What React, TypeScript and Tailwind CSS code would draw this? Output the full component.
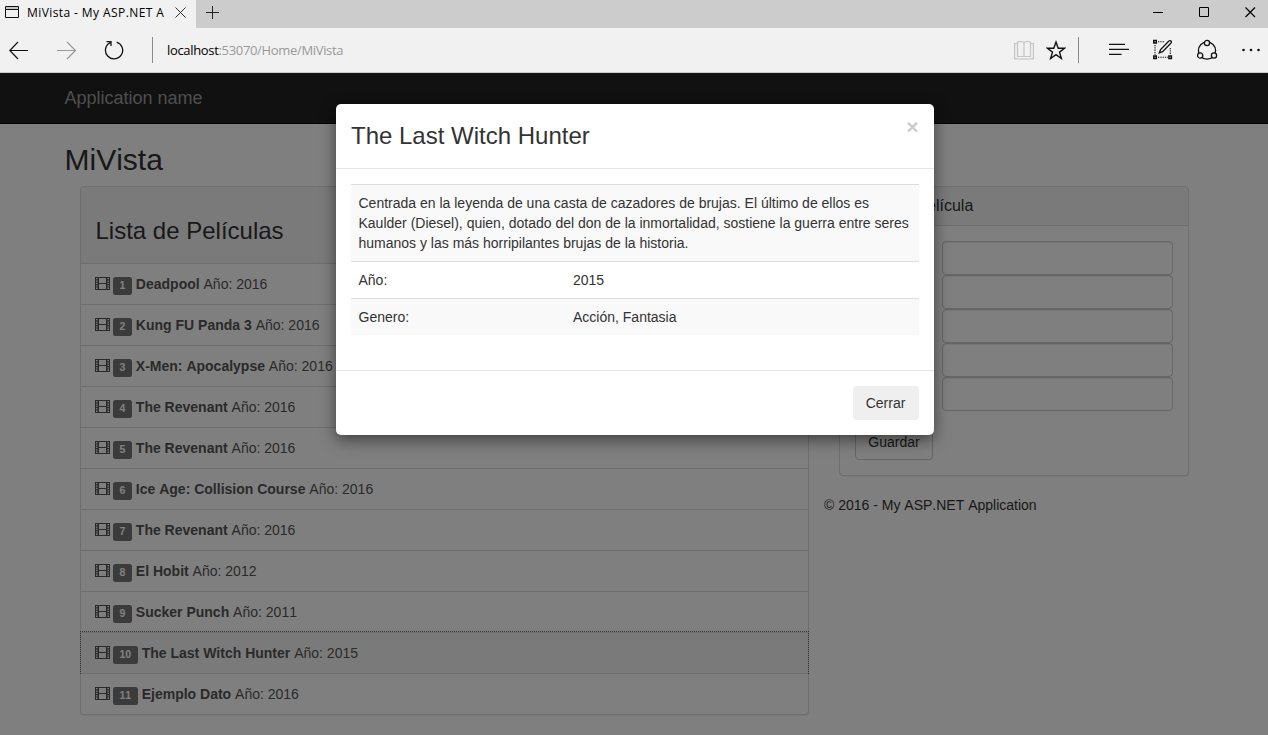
import React from "react";

const movies = [
  { title: "Deadpool", year: 2016 },
  { title: "Kung FU Panda 3", year: 2016 },
  { title: "X-Men: Apocalypse", year: 2016 },
  { title: "The Revenant", year: 2016 },
  { title: "The Revenant", year: 2016 },
  { title: "Ice Age: Collision Course", year: 2016 },
  { title: "The Revenant", year: 2016 },
  { title: "El Hobit", year: 2012 },
  { title: "Sucker Punch", year: 2011 },
  { title: "The Last Witch Hunter", year: 2015 },
  { title: "Ejemplo Dato", year: 2016 },
];

const SELECTED = 9;

function FilmIcon() {
  return (
    <svg width="15" height="13" viewBox="0 0 15 13" className="mt-[13px] block shrink-0" fill="#555">
      <path
        fillRule="evenodd"
        d="M0 0H15V13H0ZM4 1V6H11V1ZM4 7V12H11V7ZM1 1V2.3H2.5V1ZM1 3.4V4.7H2.5V3.4ZM1 5.8V7.1H2.5V5.8ZM1 8.2V9.5H2.5V8.2ZM1 10.6V11.9H2.5V10.6ZM12.5 1V2.3H14V1ZM12.5 3.4V4.7H14V3.4ZM12.5 5.8V7.1H14V5.8ZM12.5 8.2V9.5H14V8.2ZM12.5 10.6V11.9H14V10.6Z"
      />
    </svg>
  );
}

function TabBar() {
  return (
    <div className="flex h-7 bg-[#ccc]">
      <div className="flex w-[196px] bg-[#f1f1f1]">
        <svg width="14" height="12" viewBox="0 0 14 12" className="mt-1.5 ml-[5px] shrink-0" fill="none" stroke="#111">
          <path d="M.5 .5H13.5V11.5H.5ZM.5 3.5H13.5" />
          <path d="M1 2H13" stroke="#999" />
        </svg>
        <span className="ml-2 w-[139px] overflow-hidden text-[12px] leading-[25px] tracking-[0.41px] whitespace-nowrap text-black">MiVista - My ASP.NET A</span>
        <svg width="11" height="11" viewBox="0 0 11 11" className="mt-[7px] ml-[9px] shrink-0" stroke="#333">
          <path d="M.5 .5L10.5 10.5M10.5 .5L.5 10.5" />
        </svg>
      </div>
      <svg width="13" height="13" viewBox="0 0 13 13" className="mt-1.5 ml-2.5" stroke="#222">
        <path d="M6.5 0V13M0 6.5H13" />
      </svg>
      <div className="mt-[7px] mr-3 ml-auto flex gap-9">
        <svg width="10" height="11" viewBox="0 0 10 11" stroke="#000"><path d="M0 5.5H10" /></svg>
        <svg width="10" height="10" viewBox="0 0 10 10" fill="none" stroke="#000"><path d="M.5 .5H9.5V9.5H.5Z" /></svg>
        <svg width="11" height="11" viewBox="0 0 11 11" stroke="#000" strokeWidth="1.2"><path d="M.5 .5L10 10M10 .5L.5 10" /></svg>
      </div>
    </div>
  );
}

function Toolbar() {
  return (
    <div className="flex h-[45px] items-start border-b border-[#ccc] bg-[#f1f1f1] pt-[9px]">
      <svg width="20" height="26" viewBox="0 0 20 26" className="ml-[9px]" fill="none" stroke="#111" strokeWidth="1.2">
        <path d="M.8 13.5H19M9 5L.8 13.5L9 22" />
      </svg>
      <svg width="20" height="26" viewBox="0 0 20 26" className="ml-7" fill="none" stroke="#999" strokeWidth="1.2">
        <path d="M0 13.5H18.5M10 5L18.5 13.5L10 22" />
      </svg>
      <svg width="20" height="26" viewBox="0 0 20 26" className="ml-[27px]" fill="none" stroke="#111" strokeWidth="1.3">
        <path d="M12.7 5.1A8.6 8.6 0 1 1 6.2 5.6M2.5 4.6H7V9" />
      </svg>
      <div className="ml-7 h-[26px] w-px bg-[#8a8a8a]" />
      <span className="ml-[14px] text-[13px] leading-[26px] tracking-[-0.33px] whitespace-nowrap text-[#999]">
        <span className="text-black">localhost</span>:53070/Home/MiVista
      </span>
      <div className="ml-auto flex">
        <svg width="20" height="26" viewBox="0 0 20 26" fill="none" stroke="#c4c4c4" strokeWidth="1.2">
          <path d="M10 5.5V19.5M10 5.5Q7 3.8 3.5 5V19.5H16.5V5Q13 3.8 10 5.5M3 6.5H.6V22H19.4V6.5H17" />
        </svg>
        <svg width="20" height="26" viewBox="0 0 20 26" className="ml-3" fill="none" stroke="#111" strokeWidth="1.4">
          <path d="M10 5L12.2 11.2H18.7L13.5 15.1L15.4 21.5L10 17.7L4.6 21.5L6.5 15.1L1.3 11.2H7.8Z" />
        </svg>
        <div className="ml-3 h-[26px] w-px bg-[#8a8a8a]" />
        <svg width="20" height="26" viewBox="0 0 20 26" className="ml-[30px]" stroke="#111" strokeWidth="1.3">
          <path d="M0 7.3H16M0 12.3H20M0 17.4H12.5" />
        </svg>
        <svg width="20" height="26" viewBox="0 0 20 26" className="ml-6" fill="none" stroke="#111">
          <path d="M5 4.8H12M2 8V18M5 20.3H15M17.3 11V18" strokeDasharray="1.3 1" strokeWidth="1.1" />
          <path d="M.8 3.5H3.3V6H.8ZM.8 19H3.3V21.5H.8ZM15.9 19H18.4V21.5H15.9Z" strokeWidth="1.5" />
          <path d="M6.3 15.8L7.6 12.6L15.6 4.2Q17.2 3 18.3 4.2Q18.8 5.2 17.8 6.3L9.6 14.6Z" strokeWidth="1.3" />
        </svg>
        <svg width="22" height="26" viewBox="0 0 22 26" className="ml-[24px]" fill="none" stroke="#111" strokeWidth="1.3">
          <circle cx="10" cy="13.6" r="8.6" />
          <circle cx="10" cy="6" r="2.6" fill="#f1f1f1" />
          <circle cx="3.2" cy="18.5" r="2.6" fill="#f1f1f1" />
          <circle cx="17" cy="18.5" r="2.6" fill="#f1f1f1" />
        </svg>
        <svg width="18" height="26" viewBox="0 0 18 26" className="mr-2 ml-[23px]" fill="#111">
          <circle cx="1.5" cy="13" r="1.3" /><circle cx="9" cy="13" r="1.3" /><circle cx="16.5" cy="13" r="1.3" />
        </svg>
      </div>
    </div>
  );
}

function MovieList() {
  return (
    <section className="ml-[15px] h-[529px] w-[729px] rounded border border-[#ddd] bg-white shadow-[0_1px_1px_rgba(0,0,0,0.05)]">
      <div className="h-[76px] rounded-t bg-[#f5f5f5] pt-[31px] pl-[14.5px]">
        <h3 className="text-[24px] leading-[26px] text-[#333]">Lista de Películas</h3>
      </div>
      <ul>
        {movies.map((m, i) => (
          <li
            key={i}
            className={
              "relative flex h-[41px] border-t border-[#ddd] pl-[14px] text-[#555]" +
              (i === SELECTED ? " bg-[#f5f5f5]" : "")
            }
          >
            {i === SELECTED && (
              <div className="absolute -top-0.5 -right-px -bottom-px -left-px border-x border-t border-dotted border-[#666]" />
            )}
            <FilmIcon />
            <span className="mt-[13px] ml-[3px] h-[18px] shrink-0 rounded-[2.5px] bg-[#777] px-[6.5px] text-[10.5px] leading-[17px] font-bold text-white">
              {i + 1}
            </span>
            <span className="ml-[4px] text-[14px] leading-[41px] whitespace-nowrap">
              <b>{m.title}</b> Año: {m.year}
            </span>
          </li>
        ))}
      </ul>
    </section>
  );
}

function AddMovie() {
  return (
    <aside className="ml-[15px] w-[365px]">
      <div className="ml-[15px] h-[290px] rounded border border-[#ddd] bg-white shadow-[0_1px_1px_rgba(0,0,0,0.05)]">
        <div className="h-[39px] rounded-t border-b border-[#ddd] bg-[#f5f5f5] pl-[15px] text-[16px] leading-[37px]">Agregar Película</div>
        <form className="px-[15px] pt-[15px]">
          <div className="ml-[87px] flex flex-col">
            {[0, 1, 2, 3, 4].map((i) => (
              <input key={i} className="h-[34px] w-full rounded border border-[#ccc] bg-white shadow-[inset_0_1px_1px_rgba(0,0,0,0.075)]" />
            ))}
          </div>
          <button type="button" className="mt-[15px] h-[34px] w-[78px] rounded border border-[#ccc] bg-white pb-0.5 text-[14px] leading-[30px]">Guardar</button>
        </form>
      </div>
      <footer className="mt-[19px] text-[14px] leading-5">© 2016 - My ASP.NET Application</footer>
    </aside>
  );
}

function Modal() {
  return (
    <div className="absolute inset-0 bg-black/50">
      <div className="mt-[31px] ml-[336px] h-[331px] w-[597.5px] rounded-[5px] bg-white text-[14px] text-[#333] shadow-[0_5px_15px_rgba(0,0,0,0.5)]">
        <div className="flex h-[65px] items-start justify-between border-b border-[#e5e5e5] px-[15px]">
          <h3 className="pt-[18px] text-[24px] leading-[28px]">The Last Witch Hunter</h3>
          <button className="pt-[12px] text-[21px] leading-[21px] font-bold text-[#ccc]">×</button>
        </div>
        <div className="h-[201px] px-[15px] pt-[15px]">
          <div className="h-[77px] border-t border-[#ddd] bg-[#f9f9f9] px-[7.5px] pt-2 leading-5">
            <p>Centrada en la leyenda de una casta de cazadores de brujas. El último de ellos es Kaulder (Diesel), quien, dotado del don de la inmortalidad, sostiene la guerra entre seres humanos y las más horripilantes brujas de la historia.</p>
          </div>
          <div className="flex h-[37px] border-t border-[#ddd] px-[7.5px] pt-2 leading-5">
            <span className="w-[214.5px]">Año:</span>
            <span>2015</span>
          </div>
          <div className="flex h-[37px] border-t border-[#ddd] bg-[#f9f9f9] px-[7.5px] pt-2 leading-5">
            <span className="w-[214.5px]">Genero:</span>
            <span>Acción, Fantasia</span>
          </div>
        </div>
        <div className="flex justify-end border-t border-[#e5e5e5] px-[15px] pt-[15px]">
          <button className="h-[34px] w-[66px] rounded bg-[#efefef]">Cerrar</button>
        </div>
      </div>
    </div>
  );
}

export default function App() {
  return (
    <div className="flex h-[735px] w-[1268px] flex-col overflow-hidden bg-white">
      <header className="font-['Open_Sans',sans-serif]">
        <TabBar />
        <Toolbar />
      </header>
      <main className="relative flex-1 overflow-hidden font-['Liberation_Sans',Arial,sans-serif] text-[#333] [font-kerning:none]">
        <nav className="h-[51px] border-b border-[#080808] bg-[#222] pl-[64.5px] text-[18px] leading-[50px] text-[#9d9d9d]">Application name</nav>
        <div className="pl-[65px]">
          <h2 className="-ml-[0.5px] h-[62px] pt-[19px] text-[30px] leading-[33px]">MiVista</h2>
          <div className="flex">
            <MovieList />
            <AddMovie />
          </div>
        </div>
        <Modal />
      </main>
    </div>
  );
}
